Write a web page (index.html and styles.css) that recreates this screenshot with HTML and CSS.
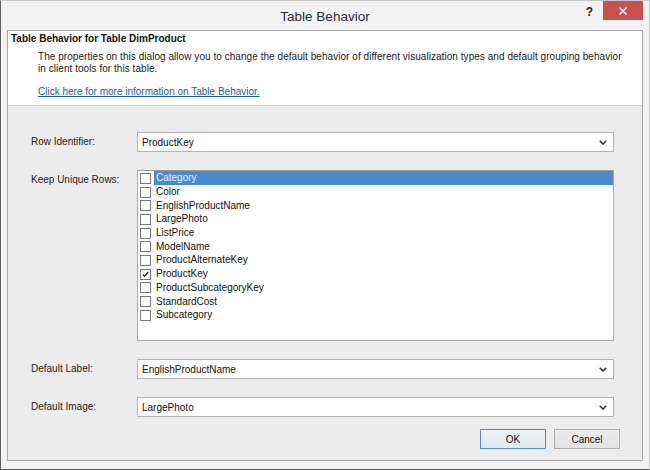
FILE: index.html
```html
<!DOCTYPE html>
<html>
<head>
<meta charset="utf-8">
<title>Table Behavior</title>
<link rel="stylesheet" href="styles.css">
</head>
<body>
<div class="window">
  <div class="titlebar">
    <div></div>
    <div class="title">Table Behavior</div>
    <div class="controls">
      <span class="help">?</span>
      <span class="close"><svg width="10" height="10" viewBox="0 0 10 10"><path d="M1.5 1.5 L8.5 8.5 M8.5 1.5 L1.5 8.5" stroke="#fff" stroke-width="1.6" fill="none"/></svg></span>
    </div>
  </div>
  <div class="client">
    <div class="header">
      <div class="header-title">Table Behavior for Table DimProduct</div>
      <p class="desc">The properties on this dialog allow you to change the default behavior of different visualization types and default grouping behavior<br>in client tools for this table.</p>
      <a class="link" href="#">Click here for more information on Table Behavior.</a>
    </div>
    <div class="form">
      <div class="label">Row Identifier:</div>
      <div class="select"><span>ProductKey</span><svg class="chev" width="8" height="5" viewBox="0 0 8 5"><path d="M0.8 0.8 L4 4 L7.2 0.8" stroke="#333" stroke-width="1.6" fill="none"/></svg></div>

      <div class="label">Keep Unique Rows:</div>
      <div class="listbox">
        <div class="item selected"><span class="cb"></span><span class="text">Category</span></div>
        <div class="item"><span class="cb"></span><span class="text">Color</span></div>
        <div class="item"><span class="cb"></span><span class="text">EnglishProductName</span></div>
        <div class="item"><span class="cb"></span><span class="text">LargePhoto</span></div>
        <div class="item"><span class="cb"></span><span class="text">ListPrice</span></div>
        <div class="item"><span class="cb"></span><span class="text">ModelName</span></div>
        <div class="item"><span class="cb"></span><span class="text">ProductAlternateKey</span></div>
        <div class="item"><span class="cb checked"><svg width="11" height="11" viewBox="0 0 11 11"><path d="M2.2 5.6 L4.3 7.8 L8.6 2.6" stroke="#111" stroke-width="1.6" fill="none"/></svg></span><span class="text">ProductKey</span></div>
        <div class="item"><span class="cb"></span><span class="text">ProductSubcategoryKey</span></div>
        <div class="item"><span class="cb"></span><span class="text">StandardCost</span></div>
        <div class="item"><span class="cb"></span><span class="text">Subcategory</span></div>
      </div>

      <div class="label">Default Label:</div>
      <div class="select"><span>EnglishProductName</span><svg class="chev" width="8" height="5" viewBox="0 0 8 5"><path d="M0.8 0.8 L4 4 L7.2 0.8" stroke="#333" stroke-width="1.6" fill="none"/></svg></div>

      <div class="label">Default Image:</div>
      <div class="select"><span>LargePhoto</span><svg class="chev" width="8" height="5" viewBox="0 0 8 5"><path d="M0.8 0.8 L4 4 L7.2 0.8" stroke="#333" stroke-width="1.6" fill="none"/></svg></div>
    </div>
    <div class="actions">
      <button class="btn default">OK</button>
      <button class="btn">Cancel</button>
    </div>
  </div>
</div>
</body>
</html>
```

FILE: styles.css
```css
* { box-sizing: border-box; }
html, body { margin: 0; padding: 0; }
body {
  width: 650px;
  height: 470px;
  font-family: "Liberation Sans", Arial, sans-serif;
  font-size: 10px;
  color: #1b1b1b;
  background: #f2f2f2;
}
.window {
  width: 650px;
  height: 470px;
  display: flex;
  flex-direction: column;
  background: #f3f3f3;
  border-left: 1px solid #5e5e5e;
  border-bottom: 1px solid #5e5e5e;
  border-top: 1px solid #c8c8c8;
  border-right: 1px solid #c8c8c8;
}
.titlebar {
  height: 29px;
  flex: none;
  display: grid;
  grid-template-columns: 1fr auto 1fr;
}
.title {
  align-self: center;
  font-size: 13.5px;
  color: #2b2b2b;
  padding-top: 1px;
}
.controls {
  display: flex;
  justify-content: flex-end;
  align-items: flex-start;
  padding-right: 6px;
}
.help {
  font-weight: bold;
  font-size: 12px;
  color: #1a1a1a;
  margin-top: 4px;
  margin-right: 10px;
}
.close {
  width: 40px;
  height: 19px;
  background: #c75050;
  display: flex;
  align-items: center;
  justify-content: center;
}
.client {
  flex: 1;
  margin: 0 6px 8px 6px;
  border: 1px solid #a6a6a6;
  background: #ececec;
  display: flex;
  flex-direction: column;
}
.header {
  background: #ffffff;
  border-bottom: 1px solid #d0d0d0;
  padding: 1px 0 7px 0;
  height: 75px;
}
.header-title {
  font-weight: bold;
  line-height: 13px;
  padding-left: 3px;
  color: #111;
}
.desc {
  margin: 6px 0 0 0;
  padding-left: 30px;
  line-height: 12px;
  color: #222;
  letter-spacing: 0.05px;
}
.link {
  display: inline-block;
  margin: 10px 0 0 30px;
  line-height: 13px;
  color: #1c5daa;
  text-decoration: underline;
}
.form {
  display: grid;
  grid-template-columns: 106px 477px;
  row-gap: 18px;
  padding: 26px 0 0 23px;
}
.label {
  line-height: 13px;
  padding-top: 3px;
  color: #222;
}
.select {
  height: 20px;
  background: #fff;
  border: 1px solid #b4b4b4;
  display: flex;
  align-items: center;
  justify-content: space-between;
  padding: 0 6px 0 4px;
  color: #111;
}
.listbox {
  height: 171px;
  background: #fff;
  border: 1px solid #a9a9a9;
  border-top-color: #9a9a9a;
}
.item {
  height: 13.7px;
  display: flex;
  align-items: center;
  padding-left: 2px;
}
.cb {
  width: 11px;
  height: 11px;
  border: 1px solid #7a7a7a;
  background: #fff;
  flex: none;
  margin-top: 1px;
  display: flex;
  align-items: center;
  justify-content: center;
}
.cb svg { display: block; }
.text {
  flex: 1;
  margin-left: 3px;
  padding-left: 2px;
  height: 100%;
  display: flex;
  align-items: center;
  color: #111;
}
.item.selected .text {
  background: #4a8acb;
  color: #e8f2fc;
}
.actions {
  display: flex;
  justify-content: flex-end;
  gap: 8px;
  padding: 12px 22px 0 0;
}
.btn {
  width: 66px;
  height: 20px;
  font-family: "Liberation Sans", Arial, sans-serif;
  font-size: 10px;
  color: #111;
  background: linear-gradient(#ececec, #e2e2e2);
  border: 1px solid #adadad;
  padding: 0;
}
.btn.default {
  border-color: #4f8bc6;
  background: linear-gradient(#eef3f8, #e3e8ee);
}
```
